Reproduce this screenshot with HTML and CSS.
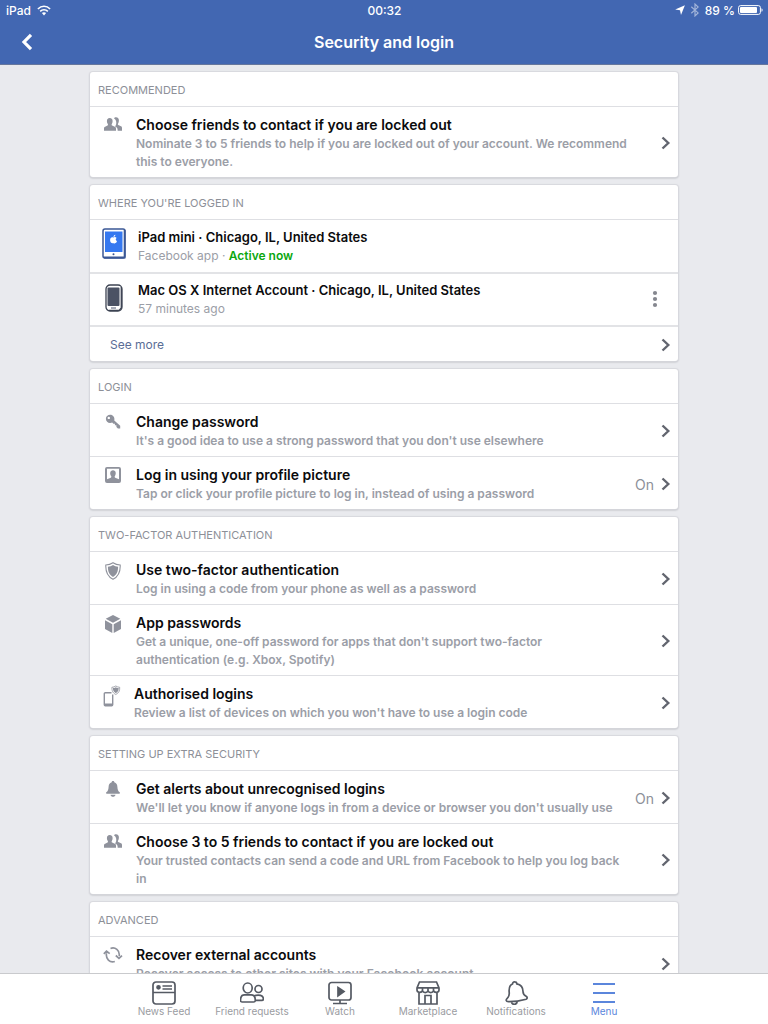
FILE: index.html
```html
<!DOCTYPE html>
<html lang="en-GB">
<head>
<meta charset="utf-8">
<meta name="viewport" content="width=device-width, initial-scale=1">
<title>Security and login</title>
<link rel="stylesheet" href="styles.css">
</head>
<body>
<svg class="sprite" aria-hidden="true">
  <symbol id="chevron" viewBox="0 0 10 14"><path d="M1.500 1.500 7.300 7 1.500 12.500" fill="none" stroke="currentColor" stroke-width="2.400"/></symbol>
  <symbol id="friends" viewBox="0 0 18 14"><path d="M12 .3c2 0 3 1.300 2.900 3.200 0 1.200-.3 2.200-.8 2.900-.3.500-.3 1.300.2 1.600l2.700 1.200c.8.4 1 1.100 1 2V13.700h-4.300c0-2.500-.5-3.400-2.600-4.300 1.100-1.400 1.300-3 1.100-4.600C12 3.300 11.200 2.200 10 1.600 10.300.8 11 .3 12 .3Z"/><path d="M5.700 1.100c2 0 3 1.300 2.900 3.100 0 1.100-.3 2.100-.8 2.800-.3.500-.3 1.300.3 1.600l2.700 1.100c.9.400 1.200 1 1.200 2v2H0v-2c0-1 .2-1.600 1.100-2l2.400-1.100c.6-.3.6-1.100.3-1.600-.6-.7-.9-1.700-.9-2.800 0-1.800.9-3.100 2.800-3.100Z"/></symbol>
</svg>
<div class="app">
  <header class="topbar">
    <div class="status">
      <div class="status-side">
        <span>iPad</span>
        <svg width="14" height="11" viewBox="0 0 14 11" fill="none" stroke="currentColor" stroke-width="1.600" aria-hidden="true"><path d="M.9 4c3.500-3.600 8.700-3.600 12.200 0M3.200 6.400c2.200-2.200 5.400-2.200 7.600 0"/><path d="M4.900 8.100c1.200-1.200 3-1.200 4.200 0L7 10.400Z" fill="currentColor" stroke="none"/></svg>
      </div>
      <time>00:32</time>
      <div class="status-side status-end">
        <svg width="10" height="10" viewBox="0 0 10 10" fill="currentColor" aria-hidden="true"><path d="M9.900.2 6 10 5 5.300.2 4.400Z"/></svg>
        <svg class="dim" width="10" height="14" viewBox="0 0 10 14" fill="none" stroke="currentColor" stroke-width="1.200" aria-hidden="true"><path d="m1.300 3.800 6.800 6.100L5 12.900V1.100l3.100 3-6.800 6.100"/></svg>
        <span class="percent">89 %</span>
        <svg width="25" height="10" viewBox="0 0 25 10" aria-hidden="true"><rect x=".6" y=".6" width="21.800" height="8.800" rx="2" fill="none" stroke="currentColor"/><rect x="2" y="2" width="17" height="6" rx="1" fill="currentColor"/><path d="M23.500 3.200c1.500.4 1.500 3.200 0 3.600Z" fill="currentColor"/></svg>
      </div>
    </div>
    <div class="titlebar">
      <button class="back" type="button" aria-label="Back"><svg width="12" height="18" viewBox="0 0 12 18" fill="none" stroke="currentColor" stroke-width="3.200" aria-hidden="true"><path d="M10 1.800 3 9l7 7.200"/></svg></button>
      <h1>Security and login</h1>
    </div>
  </header>

  <main class="content">
    <section class="card">
      <h2>Recommended</h2>
      <a class="row" href="#">
        <span class="icon"><svg width="18" height="14"><use href="#friends"/></svg></span>
        <span class="text"><strong>Choose friends to contact if you are locked out</strong><small>Nominate 3 to 5 friends to help if you are locked out of your account. We recommend this to everyone.</small></span>
        <svg class="chevron"><use href="#chevron"/></svg>
      </a>
    </section>

    <section class="card devices">
      <h2>Where you're logged in</h2>
      <div class="row">
        <span class="icon"><svg width="24" height="31" viewBox="0 0 24 31" aria-hidden="true"><rect x="1" y="1" width="22" height="29" rx="2" fill="#fff" stroke="#3a5795" stroke-width="1.500"/><path d="M22.600 2v27.500H2" fill="none" stroke="#3a5795" stroke-width="1.800"/><rect x="3" y="3.500" width="17.500" height="20.500" fill="#3578f0"/><circle cx="11.500" cy="26.300" r="1" fill="#3a5795"/><path d="M11.300 9.500c.9-.6 2.500-.8 3.300.5-1.300.8-1.100 2.500.4 3.100-.5 1.700-1.500 2.700-3.400 2.100-2 .6-3.400-.7-3.500-2.900-.1-2.300 1.500-3.500 3.200-2.800Zm.2-.6c0-1.200.8-2.100 1.900-2.200 0 1.200-.8 2.100-1.900 2.200Z" fill="#fff"/></svg></span>
        <span class="text"><strong>iPad mini · Chicago, IL, United States</strong><small>Facebook app · <b>Active now</b></small></span>
      </div>
      <div class="row phone">
        <span class="icon"><svg width="18" height="28" viewBox="0 0 18 28" aria-hidden="true"><rect x="1" y="1" width="16" height="26" rx="4" fill="#fff" stroke="#3c4352" stroke-width="1.300"/><path d="M16.300 3v21l-2 2.300H4" fill="none" stroke="#3c4352" stroke-width="1.300"/><rect x="2.500" y="3.500" width="12" height="18.500" rx="1" fill="#4b5264"/><path d="M6 24h5" stroke="#8b90a0" stroke-width="1.500"/></svg></span>
        <span class="text"><strong>Mac OS X Internet Account · Chicago, IL, United States</strong><small>57 minutes ago</small></span>
        <button class="more" type="button" aria-label="More options"><svg width="6" height="18" viewBox="0 0 6 18" fill="currentColor" aria-hidden="true"><circle cx="3" cy="3" r="2.100"/><circle cx="3" cy="9" r="2.100"/><circle cx="3" cy="15" r="2.100"/></svg></button>
      </div>
      <a class="row see-more" href="#"><span>See more</span><svg class="chevron"><use href="#chevron"/></svg></a>
    </section>

    <section class="card">
      <h2>Login</h2>
      <a class="row" href="#">
        <span class="icon"><svg width="16" height="16" viewBox="0 0 16 16" aria-hidden="true"><path fill-rule="evenodd" d="M5.200.8C2.700.8.900 2.500.9 4.700c0 2.500 2 4.300 4.300 4.200.8 0 1.500-.1 2-.3l1.200 1.200h1.500v1.500h1.500v1.600l1.500 1.500h2.300v-2.600L9.300 6.500C10 3.300 8 .8 5.200.8ZM3.800 2.700a1.200 1.200 0 1 1 0 2.400 1.200 1.200 0 0 1 0-2.400Z"/></svg></span>
        <span class="text"><strong>Change password</strong><small>It's a good idea to use a strong password that you don't use elsewhere</small></span>
        <svg class="chevron"><use href="#chevron"/></svg>
      </a>
      <a class="row" href="#">
        <span class="icon"><svg width="16" height="16" viewBox="0 0 16 16" aria-hidden="true"><path fill-rule="evenodd" d="M2 0h12q2 0 2 2v12q0 2-2 2H2q-2 0-2-2V2q0-2 2-2Zm0 1.700v10.600l3.800-1.500c.7-.4.700-1.200.3-1.700-1.500-2.100-1.300-5.900 1.900-5.900s3.400 3.800 1.900 5.900c-.4.500-.4 1.300.3 1.700l3.800 1.500V1.700Z"/></svg></span>
        <span class="text"><strong>Log in using your profile picture</strong><small>Tap or click your profile picture to log in, instead of using a password</small></span>
        <span class="value">On</span>
        <svg class="chevron"><use href="#chevron"/></svg>
      </a>
    </section>

    <section class="card">
      <h2>Two-factor authentication</h2>
      <a class="row" href="#">
        <span class="icon"><svg width="16" height="18" viewBox="0 0 16 18" aria-hidden="true"><path d="M8 .7c2.200 1.500 4.500 2.200 7.200 2.300.3 6.300-1.100 11.200-7.200 14.300C1.900 14.200.5 9.300.8 3 3.500 2.900 5.800 2.200 8 .7Z" fill="none" stroke="currentColor" stroke-width="1.100"/><path d="M8 3c1.500 1 3.200 1.600 5.100 1.800 0 4.600-1.200 8-5.100 10.200-3.900-2.200-5.100-5.600-5.100-10.200C4.800 4.600 6.500 4 8 3Z"/></svg></span>
        <span class="text"><strong>Use two-factor authentication</strong><small>Log in using a code from your phone as well as a password</small></span>
        <svg class="chevron"><use href="#chevron"/></svg>
      </a>
      <a class="row" href="#">
        <span class="icon"><svg width="16" height="18" viewBox="0 0 16 18" aria-hidden="true"><path d="M8 0 15.300 3.800 8 7.700.7 3.800ZM0 5.300l7.300 4V18L0 13.900Zm16 0-7.300 4V18l7.300-4.100Z"/></svg></span>
        <span class="text"><strong>App passwords</strong><small>Get a unique, one-off password for apps that don't support two-factor<br>authentication (e.g. Xbox, Spotify)</small></span>
        <svg class="chevron"><use href="#chevron"/></svg>
      </a>
      <a class="row compact" href="#">
        <span class="icon"><svg width="18" height="22" viewBox="0 0 18 22" aria-hidden="true"><path d="M8.500 7.800H2.300Q1.300 7.800 1.300 8.800v11q0 1 1 1h6.400q1 0 1-1V9.500" fill="none" stroke="currentColor" stroke-width="1.400"/><path d="M2 18.500h7v2H2Z"/><path d="M12.800 1c1.300.9 2.400 1.100 3.900 1.300.1 3.200-.6 5.500-3.900 7.200C9.500 7.800 8.800 5.500 8.900 2.300c1.500-.2 2.600-.4 3.900-1.300Z" fill="none" stroke="currentColor" stroke-width=".8"/><path d="M12.800 2.200c.9.600 1.700.8 2.900.9 0 2.300-.6 3.900-2.900 5.100-2.300-1.200-2.900-2.800-2.900-5.100 1.200-.1 2-.3 2.900-.9Z"/></svg></span>
        <span class="text"><strong>Authorised logins</strong><small>Review a list of devices on which you won't have to use a login code</small></span>
        <svg class="chevron"><use href="#chevron"/></svg>
      </a>
    </section>

    <section class="card">
      <h2>Setting up extra security</h2>
      <a class="row" href="#">
        <span class="icon"><svg width="16" height="16" viewBox="0 0 16 16" aria-hidden="true"><path d="M8 0c.9 0 1.300.5 1.300 1.300 2.200.7 3 2.300 3.100 4.700.1 2.800.8 4.300 2.300 5.300.5.400.3 1.400-.4 1.400H1.700c-.7 0-.9-1-.4-1.400 1.500-1 2.200-2.500 2.300-5.300.1-2.400.9-4 3.100-4.700C6.700.5 7.100 0 8 0ZM5.500 13.700h5c-.3 1.500-1.200 2.100-2.500 2.100s-2.200-.6-2.500-2.100Z"/></svg></span>
        <span class="text"><strong>Get alerts about unrecognised logins</strong><small>We'll let you know if anyone logs in from a device or browser you don't usually use</small></span>
        <span class="value">On</span>
        <svg class="chevron"><use href="#chevron"/></svg>
      </a>
      <a class="row" href="#">
        <span class="icon"><svg width="18" height="14"><use href="#friends"/></svg></span>
        <span class="text"><strong>Choose 3 to 5 friends to contact if you are locked out</strong><small>Your trusted contacts can send a code and URL from Facebook to help you log back in</small></span>
        <svg class="chevron"><use href="#chevron"/></svg>
      </a>
    </section>

    <section class="card">
      <h2>Advanced</h2>
      <a class="row" href="#">
        <span class="icon"><svg width="20" height="16" viewBox="0 0 20 16" fill="none" stroke="currentColor" stroke-width="1.700" aria-hidden="true"><path d="M7.500 1.500c4.500-1.800 9.600 1.700 8.700 7.700M11.800 14.500c-5 1.500-9.300-2.500-8.300-8.300M12.800 8.500l3.200 2.800 3-2.600M.8 6.800l2.700-2.700 3.200 2.500"/></svg></span>
        <span class="text"><strong>Recover external accounts</strong><small>Recover access to other sites with your Facebook account</small></span>
        <svg class="chevron"><use href="#chevron"/></svg>
      </a>
    </section>
  </main>

  <nav class="tabs" aria-label="Main">
    <a href="#"><svg viewBox="0 0 24 24" aria-hidden="true"><rect x="1" y="1" width="22" height="22" rx="3"/><path d="M1 11.500h22M10.500 5h9.500M10.500 8h9.500"/><circle cx="6.500" cy="6.300" r="1.500" fill="currentColor"/></svg>News Feed</a>
    <a href="#"><svg viewBox="0 0 24 24" aria-hidden="true"><ellipse cx="7.700" cy="7" rx="4.500" ry="5"/><circle cx="18.500" cy="8" r="3.500"/><path d="M4.500 13.800h6.700c2.700 0 4 2.200 4.100 5.200.1 1.400-.6 2-1.800 2H2.200c-1.100 0-1.800-.7-1.700-2 .1-2.900 1.300-5.200 4-5.200ZM14.200 14.900c1.800-1 6.200-1.100 7.700.1 1.100.9 1.600 2.100 1.500 3.200-.1.900-.7 1.200-1.500 1.200h-6"/></svg>Friend requests</a>
    <a href="#"><svg viewBox="0 0 24 24" aria-hidden="true"><rect x="1" y="1.500" width="22" height="17.500" rx="2.500"/><path d="M12 19v3M5 22.500h14"/><path d="m10 6.500 6 4-6 4.300Z" fill="currentColor"/></svg>Watch</a>
    <a href="#"><svg viewBox="0 0 24 24" aria-hidden="true"><path d="M3.500 1h17l2.500 6v2c0 2.700-4.400 3.300-5.500.7-1 2.500-4.500 2.500-5.500 0-1 2.500-4.500 2.500-5.500 0C5.400 12.300 1 11.700 1 9V7ZM1 6.800h22M3 11.500V23h18V11.500M9 23v-8.500h6V23M6.500 7v3M12 7v3M17.500 7v3"/></svg>Marketplace</a>
    <a href="#"><svg viewBox="0 0 24 24" aria-hidden="true"><path d="M8.500 3c.1-1.500 1-2.300 2.300-2.100 1.300.1 2 .9 2 2 4.600 1 6.200 4.200 6.200 7.600 0 2.700 1.300 3.800 3.100 4.700 1.400.8 1.500 2.500 0 3-6.300 1.800-11.700 2.600-17.700 2.500-2.600 0-2.700-2-1.200-3.300 2-1.700 2.300-3.200 2-6C4.800 7.400 5.500 4.200 8.500 3ZM7.500 21c.7 3.300 5.300 3.200 5.800-.6"/></svg>Notifications</a>
    <a class="active" href="#" aria-current="page"><svg viewBox="0 0 24 24" aria-hidden="true"><path d="M1 3h22M1 12h22M1 21h22"/></svg>Menu</a>
  </nav>
</div>
</body>
</html>
```
FILE: styles.css
```css
* { box-sizing: border-box; }

body {
  margin: 0;
  font-family: Inter, "Liberation Sans", sans-serif;
  color: #0b0b0d;
  background: #e9eaee;
}

a { color: inherit; text-decoration: none; }
button { border: 0; padding: 0; background: none; color: inherit; font: inherit; }
svg { display: block; flex: none; }
.sprite { display: none; }

.app {
  display: flex;
  flex-direction: column;
  height: 100vh;
}

.topbar {
  flex: none;
  background: #4267b2;
  color: #fff;
  border-bottom: 1px solid #66779d;
}

.status {
  display: grid;
  grid-template-columns: 1fr auto 1fr;
  align-items: center;
  height: 20px;
  padding: 0 5px 0 6px;
  font-size: 12px;
  font-weight: 500;
}
.status-side { display: flex; align-items: center; gap: 6px; }
.status-end { justify-content: flex-end; gap: 5px; }
.status-end .percent { margin-right: -2px; }
.dim { opacity: 0.5; }

.titlebar {
  display: grid;
  grid-template-columns: 48px 1fr 48px;
  align-items: center;
  height: 44px;
}
.back { display: flex; justify-content: center; padding-left: 6px; }
.titlebar h1 {
  margin: 0;
  font-size: 16px;
  font-weight: 600;
  text-align: center;
}

.content {
  flex: 1;
  min-height: 0;
  overflow-y: auto;
  scrollbar-width: none;
  display: flex;
  flex-direction: column;
  gap: 8px;
  padding: 7px 90px 8px;
}

.card {
  flex: none;
  background: #fff;
  border-radius: 3px;
  box-shadow: 0 0 1px 1px #d8d9de, 0 1px 2px #9fa1a8;
}
.card h2 {
  margin: 0;
  padding: 0 8px;
  font-size: 11px;
  font-weight: 400;
  line-height: 36px;
  height: 35px;
  text-transform: uppercase;
  color: #8d9098;
  border-bottom: 1px solid #dedfe3;
}

.row {
  display: flex;
  align-items: center;
  padding: 8px 7px 6px 0;
}
.row + .row { border-top: 1px solid #dedfe3; }

.icon {
  display: flex;
  justify-content: center;
  align-self: flex-start;
  flex: none;
  width: 46px;
  padding-top: 2px;
  color: #8f929c;
}
.icon svg { fill: currentColor; }
.icon svg[fill="none"] { fill: none; }

.text { flex: 1; min-width: 0; }
.text strong {
  display: block;
  font-size: 14px;
  font-weight: 600;
  line-height: 20px;
}
.text small {
  display: block;
  font-size: 12px;
  font-weight: 600;
  line-height: 18px;
  color: #9b9ea7;
}
.text + .chevron { margin-left: 31px; }

.value { font-size: 14px; color: #8d9098; padding: 0 7px 0 8px; }
.chevron { width: 10px; height: 14px; color: #62656f; }
.compact .icon { width: 44px; padding-top: 1px; }

.devices .row { padding-top: 7px; padding-bottom: 7px; }
.devices .icon { width: 48px; padding-top: 1px; }
.devices .phone .icon { padding-top: 4px; }
.devices .text strong { font-size: 13px; }
.devices .text small { font-weight: 400; }
.devices b { color: #0aa80f; font-weight: 600; }
.devices .row + .row { border-top: 2px solid #e2e3e6; padding-top: 6px; }
.more { padding: 0 13px; color: #85878f; }
.devices .row + .see-more {
  justify-content: space-between;
  padding: 8px 7px 6px 20px;
  font-size: 12px;
  line-height: 20px;
  color: #5a6d96;
}

.tabs {
  flex: none;
  display: flex;
  justify-content: center;
  height: 51px;
  background: #fff;
  border-top: 1px solid #c9cacd;
}
.tabs a {
  display: flex;
  flex-direction: column;
  align-items: center;
  width: 88px;
  padding-top: 7px;
  font-size: 10px;
  line-height: 12px;
  color: #9a9ca1;
}
.tabs svg {
  width: 24px;
  height: 24px;
  fill: none;
  stroke: #555a63;
  stroke-width: 1.700;
  color: #555a63;
}
.tabs .active { color: #5b86dc; }
.tabs .active svg { stroke: #5b86dc; stroke-width: 2; }
```
